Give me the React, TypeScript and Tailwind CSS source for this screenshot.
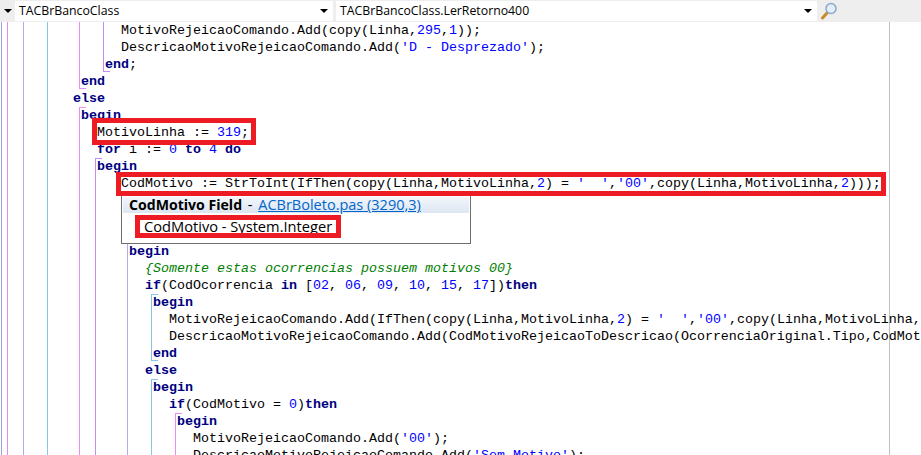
import React from "react";

type Kind = "t" | "k" | "n" | "c";
type Token = [Kind, string];

const tokenClass: Record<Kind, string> = {
  t: "text-black",
  k: "font-bold text-[#000080]",
  n: "text-[#0000ff]",
  c: "italic text-[#008000]",
};

const T = (s: string): Token => ["t", s];
const K = (s: string): Token => ["k", s];
const N = (s: string): Token => ["n", s];

const rows: { indent: string; tokens: Token[] }[] = [
  { indent: "pl-[121px]", tokens: [T("MotivoRejeicaoComando.Add(copy(Linha,"), N("295"), T(","), N("1"), T("));")] },
  { indent: "pl-[121px]", tokens: [T("DescricaoMotivoRejeicaoComando.Add("), N("'D - Desprezado'"), T(");")] },
  { indent: "pl-[105px]", tokens: [K("end"), T(";")] },
  { indent: "pl-[81px]", tokens: [K("end")] },
  { indent: "pl-[73px]", tokens: [K("else")] },
  { indent: "pl-[81px]", tokens: [K("begin")] },
  { indent: "pl-[97px]", tokens: [T("MotivoLinha := "), N("319"), T(";")] },
  { indent: "pl-[97px]", tokens: [K("for"), T(" i := "), N("0"), T(" "), K("to"), T(" "), N("4"), T(" "), K("do")] },
  { indent: "pl-[97px]", tokens: [K("begin")] },
  {
    indent: "pl-[121px]",
    tokens: [
      T("CodMotivo := StrToInt(IfThen(copy(Linha,MotivoLinha,"), N("2"), T(") = "), N("'  '"), T(","), N("'00'"),
      T(",copy(Linha,MotivoLinha,"), N("2"), T(")));"),
    ],
  },
  { indent: "pl-[129px]", tokens: [] },
  { indent: "pl-[129px]", tokens: [] },
  { indent: "pl-[129px]", tokens: [] },
  { indent: "pl-[129px]", tokens: [K("begin")] },
  { indent: "pl-[145px]", tokens: [["c", "{Somente estas ocorrencias possuem motivos 00}"]] },
  {
    indent: "pl-[145px]",
    tokens: [
      K("if"), T("(CodOcorrencia "), K("in"), T(" ["), N("02"), T(", "), N("06"), T(", "), N("09"), T(", "), N("10"),
      T(", "), N("15"), T(", "), N("17"), T("])"), K("then"),
    ],
  },
  { indent: "pl-[153px]", tokens: [K("begin")] },
  {
    indent: "pl-[169px]",
    tokens: [
      T("MotivoRejeicaoComando.Add(IfThen(copy(Linha,MotivoLinha,"), N("2"), T(") = "), N("'  '"), T(","), N("'00'"),
      T(",copy(Linha,MotivoLinha,"), N("2"), T(")));"),
    ],
  },
  {
    indent: "pl-[169px]",
    tokens: [T("DescricaoMotivoRejeicaoComando.Add(CodMotivoRejeicaoToDescricao(OcorrenciaOriginal.Tipo,CodMotivo));")],
  },
  { indent: "pl-[153px]", tokens: [K("end")] },
  { indent: "pl-[145px]", tokens: [K("else")] },
  { indent: "pl-[153px]", tokens: [K("begin")] },
  { indent: "pl-[169px]", tokens: [K("if"), T("(CodMotivo = "), N("0"), T(")"), K("then")] },
  { indent: "pl-[177px]", tokens: [K("begin")] },
  { indent: "pl-[193px]", tokens: [T("MotivoRejeicaoComando.Add("), N("'00'"), T(");")] },
  { indent: "pl-[193px]", tokens: [T("DescricaoMotivoRejeicaoComando.Add("), N("'Sem Motivo'"), T(");")] },
];

// structure guides, y values are relative to the editor top (22px below the page top)
const guides = [
  { x: 1, top: 0, bottom: 433, color: "#a5a1d8" },
  { x: 7, top: 0, bottom: 433, color: "#e28be8" },
  { x: 23, top: 0, bottom: 433, color: "#b3a8ec" },
  { x: 47, top: 0, bottom: 433, color: "#86c8e4" },
  { x: 79, top: 0, bottom: 67, color: "#ee8bee", endTick: true },
  { x: 79, top: 85, bottom: 433, color: "#ee8bee", startTick: true },
  { x: 103, top: 0, bottom: 50, color: "#c88bee", endTick: true },
  { x: 95, top: 136, bottom: 433, color: "#c88bee", startTick: true },
  { x: 127, top: 221, bottom: 433, color: "#b9a8ee" },
  { x: 151, top: 272, bottom: 339, color: "#86c8e4", startTick: true, endTick: true },
  { x: 151, top: 357, bottom: 433, color: "#86c8e4", startTick: true },
  { x: 175, top: 391, bottom: 433, color: "#ee8bee", startTick: true },
];

const Guide = ({ x, top, bottom, color, startTick, endTick }: (typeof guides)[number] & { startTick?: boolean; endTick?: boolean }) => (
  <>
    <div className="absolute w-px" style={{ left: x, top, height: bottom - top, backgroundColor: color }} />
    {startTick && <div className="absolute h-px w-[7px]" style={{ left: x, top, backgroundColor: color }} />}
    {endTick && <div className="absolute h-px w-[7px]" style={{ left: x, top: bottom - 1, backgroundColor: color }} />}
  </>
);

const Arrow = () => <span className="h-0 w-0 border-x-[4px] border-t-[4px] border-x-transparent border-t-black" />;

const Combo = ({ label, className }: { label: string; className: string }) => (
  <div className={`flex h-5 items-center justify-between bg-white pl-1 pr-[5px] ${className}`}>
    <span className="text-[12.3px] leading-5 text-black">{label}</span>
    <Arrow />
  </div>
);

const App = () => (
  <div className="relative h-[455px] w-[921px] overflow-hidden bg-white font-['Open_Sans',sans-serif]">
    <div className="flex h-[22px] items-center bg-[#eeeeee] pb-px">
      <div className="flex w-[15px] justify-center">
        <Arrow />
      </div>
      <Combo label="TACBrBancoClass" className="w-[318px]" />
      <Combo label="TACBrBancoClass.LerRetorno400" className="ml-[3px] w-[481px]" />
      <svg width="18" height="18" viewBox="0 0 18 18" className="ml-[3px]">
        <path d="M2.5 16 7 11" stroke="#c98a2b" strokeWidth="3" strokeLinecap="round" />
        <circle cx="11" cy="6.5" r="5" fill="#e4eefa" stroke="#8aa9c9" strokeWidth="1.5" />
      </svg>
    </div>

    <div className="relative h-[433px] font-['Liberation_Mono',monospace] text-[13.33px] leading-[17px]">
      <div className="absolute left-[889px] top-0 h-full w-px bg-[#c0c0c0]" />
      {guides.map((g, i) => (
        <Guide key={i} {...g} />
      ))}
      <div className="relative">
        {rows.map((row, i) => (
          <div key={i} className={`h-[17px] whitespace-pre ${row.indent}`}>
            {row.tokens.map(([kind, text], j) => (
              <span key={j} className={tokenClass[kind]}>
                {text}
              </span>
            ))}
          </div>
        ))}
      </div>
    </div>

    <div className="absolute left-[121px] top-[195px] h-[49px] w-[350px] border-x border-b border-[#6d6d6d] bg-white px-px pt-[2px] text-[14.5px]">
      <div className="flex h-[16px] items-center whitespace-pre bg-gradient-to-b from-[#f3f6fb] to-[#dde6f2] pl-[6px] text-black">
        <span className="text-[14.1px] font-bold">CodMotivo Field</span>
        <span className="px-[2px]"> - </span>
        <span className="text-[#0066cc] underline">ACBrBoleto.pas (3290,3)</span>
      </div>
      <div className="pl-[21px] pt-[4px] text-[14.65px] leading-[18px] text-black">CodMotivo - System.Integer</div>
    </div>

    <div className="absolute left-[92px] top-[118px] h-[27px] w-[164px] border-[5px] border-[#ed1c24]" />
    <div className="absolute left-[116px] top-[172px] h-[24px] w-[770px] border-[5px] border-[#ed1c24]" />
    <div className="absolute left-[135px] top-[215px] h-[23px] w-[206px] border-[5px] border-[#ed1c24]" />
  </div>
);

export default App;
